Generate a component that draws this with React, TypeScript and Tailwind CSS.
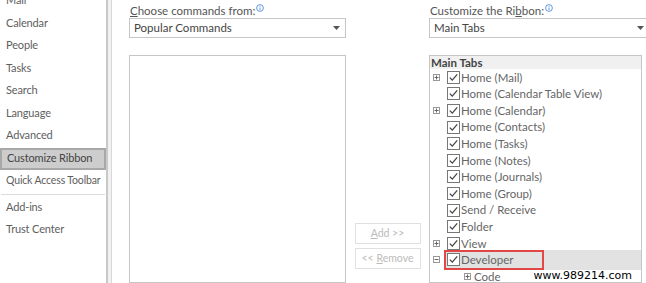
import React from "react";

const font = { fontFamily: 'Lato, "Noto Sans", sans-serif' };

const sideItems = [
  "Mail",
  "Calendar",
  "People",
  "Tasks",
  "Search",
  "Language",
  "Advanced",
];

function InfoIcon() {
  return (
    <svg width="8" height="8" viewBox="0 0 8 8" className="ml-[1px] -mt-[6px] inline-block">
      <circle cx="4" cy="4" r="3.4" fill="none" stroke="#3b7dd8" strokeWidth="0.8" />
      <rect x="3.6" y="3.4" width="0.8" height="2.6" fill="#3b7dd8" />
      <rect x="3.6" y="1.9" width="0.8" height="0.8" fill="#3b7dd8" />
    </svg>
  );
}

function Caret() {
  return (
    <svg width="7" height="4" viewBox="0 0 7 4">
      <path d="M0 0 H7 L3.5 4 Z" fill="#555" />
    </svg>
  );
}

function Expander({ open }: { open?: boolean }) {
  return (
    <svg width="7" height="7" viewBox="0 0 7 7">
      <rect x="0.5" y="0.5" width="6" height="6" fill="#fff" stroke="#999" />
      <rect x="1.5" y="3" width="4" height="1" fill="#666" />
      {!open && <rect x="3" y="1.5" width="1" height="4" fill="#666" />}
    </svg>
  );
}

function Check() {
  return (
    <svg width="13" height="13" viewBox="0 0 13 13">
      <rect x="0.5" y="0.5" width="12" height="12" fill="#fff" stroke="#777" />
      <path d="M2.8 6.6 L5.3 9.1 L10.2 3.4" fill="none" stroke="#444" strokeWidth="1.3" />
    </svg>
  );
}

type Row = { label: string; exp?: "plus" | "minus"; dev?: boolean };

const rows: Row[] = [
  { label: "Home (Mail)", exp: "plus" },
  { label: "Home (Calendar Table View)" },
  { label: "Home (Calendar)", exp: "plus" },
  { label: "Home (Contacts)" },
  { label: "Home (Tasks)" },
  { label: "Home (Notes)" },
  { label: "Home (Journals)" },
  { label: "Home (Group)" },
  { label: "Send / Receive" },
  { label: "Folder" },
  { label: "View", exp: "plus" },
  { label: "Developer", exp: "minus", dev: true },
];

export default function App() {
  return (
    <div className="flex h-[283px] w-[646px] overflow-hidden bg-white text-[11.5px] text-[#666]" style={font}>
      {/* left nav */}
      <div className="flex w-[108px] shrink-0 flex-col whitespace-nowrap border-r-2 border-[#c9c9c9] bg-white text-[11px] tracking-[-0.15px] text-[#606060]">
        <div className="-mt-[11px] flex flex-col">
          {sideItems.map((s) => (
            <div key={s} className="flex h-[22.5px] items-center pl-[6px]">
              {s}
            </div>
          ))}
        </div>
        <div className="mt-[1px] flex h-[22px] items-center border-2 border-[#a8a8a8] bg-[#cdcdcd] pl-[5px] text-[#444]">
          Customize Ribbon
        </div>
        <div className="flex h-[23px] items-center pl-[6px] text-[10.5px]">Quick Access Toolbar</div>
        <div className="mx-[1px] mb-[1px] mt-[1px] h-px bg-[#dcdcdc]" />
        <div className="flex h-[22.5px] items-center pl-[6px]">Add-ins</div>
        <div className="flex h-[22.5px] items-center pl-[6px]">Trust Center</div>
      </div>
      <div className="w-[4px] shrink-0 border-r border-[#d8d8d8] bg-[#f1f1f1]" />

      {/* main */}
      <div className="flex min-h-0 flex-1 pl-[17px]">
        {/* commands column */}
        <div className="flex min-h-0 w-[217px] shrink-0 flex-col">
          <div className="flex h-[18px] items-center pl-[1px] pt-[4px] text-[#555]">
            <span>
              <span className="underline">C</span>hoose commands from:
            </span>
            <InfoIcon />
          </div>
          <div className="flex h-[20px] items-center justify-between border border-[#c6c6c6] bg-white pl-[4px] pr-[5px] text-[#444]">
            <span>Popular Commands</span>
            <Caret />
          </div>
          <div className="mt-[17px] min-h-0 flex-1 border border-[#c6c6c6] bg-white" />
        </div>

        {/* buttons */}
        <div className="flex w-[83px] shrink-0 flex-col items-center gap-[4px] pt-[223px]">
          <div className="flex h-[21px] w-[66px] items-center justify-center border border-[#e0e0e0] text-[10.5px] text-[#bbb]">
            <span>
              <span className="underline">A</span>dd &gt;&gt;
            </span>
          </div>
          <div className="flex h-[21px] w-[66px] items-center justify-center border border-[#e0e0e0] text-[10.5px] text-[#bbb]">
            <span>
              &lt;&lt; <span className="underline">R</span>emove
            </span>
          </div>
        </div>

        {/* ribbon column */}
        <div className="flex min-h-0 w-[220px] shrink-0 flex-col">
          <div className="flex h-[18px] items-center pl-[1px] pt-[4px] text-[#555]">
            <span>
              Customize the Ri<span className="underline">b</span>bon:
            </span>
            <InfoIcon />
          </div>
          <div className="flex h-[20px] items-center justify-between border border-[#c6c6c6] bg-white pl-[4px] pr-[4px] text-[#444]">
            <span>Main Tabs</span>
            <Caret />
          </div>
          <div className="relative mt-[17px] min-h-0 w-[213px] flex-1 overflow-hidden border border-[#c6c6c6] bg-white">
            <div className="flex h-[13px] items-center bg-[#f0f0f0] pl-[1px] font-bold leading-none text-[#444]">
              Main Tabs
            </div>
            <div className="flex flex-col">
              {rows.map((r) => (
                <div key={r.label} className="flex h-[16.6px] items-center pl-[3px]">
                  <div className="flex w-[11px] shrink-0 items-center">
                    {r.exp && <Expander open={r.exp === "minus"} />}
                  </div>
                  {r.dev ? (
                    <div className="relative flex flex-1 items-center bg-[#e2e2e2]">
                      <div className="flex h-[20px] w-[100px] items-center gap-[1px] border-2 border-[#e04848] pl-[1px]">
                        <Check />
                        <span>Developer</span>
                      </div>
                    </div>
                  ) : (
                    <div className="flex items-center gap-[1px] pl-[3px]">
                      <Check />
                      <span>{r.label}</span>
                    </div>
                  )}
                </div>
              ))}
              <div className="flex h-[16.6px] items-center pl-[34px]">
                <Expander />
                <span className="ml-[3px]">Code</span>
              </div>
            </div>
            <div
              className="absolute right-[6px] bottom-[1px] bg-white px-[3px] text-[11px] leading-[11px] text-black"
              style={{ fontFamily: '"DejaVu Sans", sans-serif' }}
            >
              www.989214.com
            </div>
          </div>
        </div>
      </div>
    </div>
  );
}
